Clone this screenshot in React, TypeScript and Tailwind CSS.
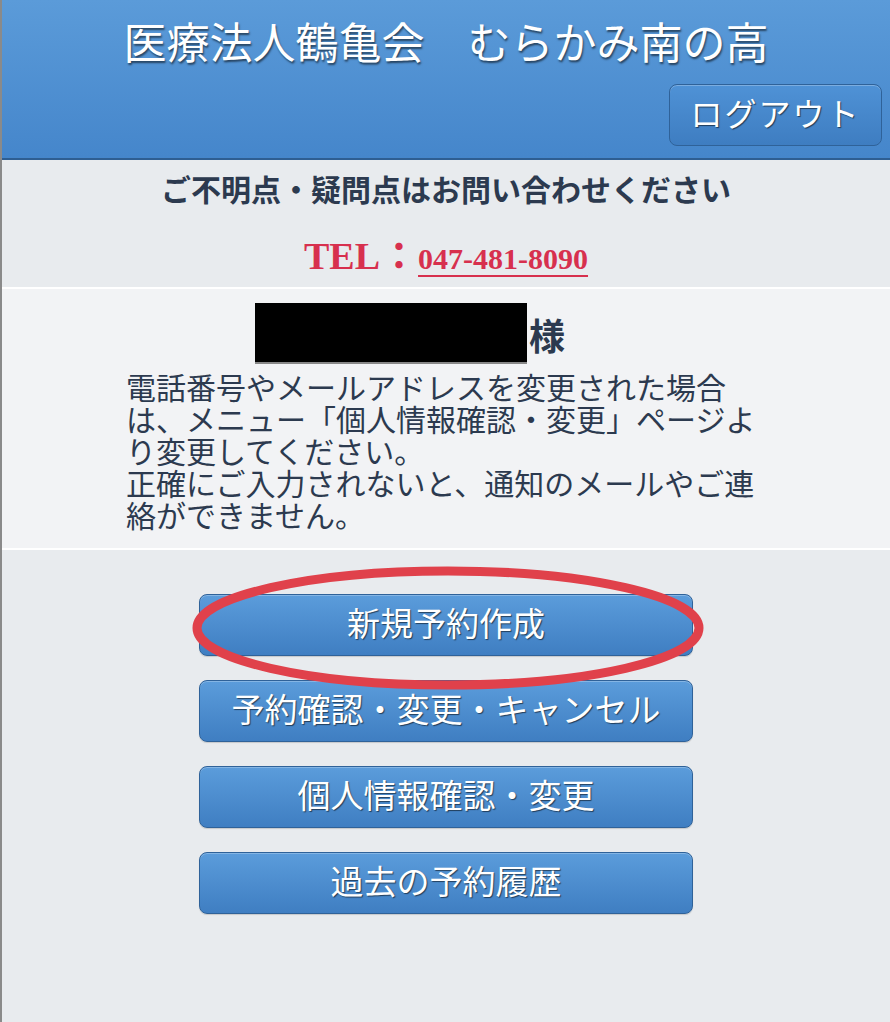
import React from "react";

const font = "font-['Liberation_Serif','Noto_Sans_CJK_JP',serif]";

function MenuButton({ label }: { label: string }) {
  return (
    <button
      className={`w-[494px] h-[62px] rounded-[8px] border border-[#2f6299] bg-gradient-to-b from-[#5b9cdb] to-[#3f7ec2] text-white text-[33px] leading-none shadow-[inset_0_1px_0_rgba(255,255,255,0.25),0_1px_1px_rgba(0,0,0,0.15)] [text-shadow:1px_1px_1px_rgba(0,0,0,0.55)] ${font}`}
    >
      {label}
    </button>
  );
}

export default function App() {
  return (
    <div className={`min-h-screen w-full bg-[#e8ebee] border-l-2 border-[#8a8a8a] ${font}`}>
      <header className="h-[160px] bg-gradient-to-b from-[#5b9bd9] to-[#4586cb] border-b-2 border-[#2e5e92] flex flex-col items-center">
        <h1 className="mt-[20px] text-[43px] leading-[50px] text-white [text-shadow:1px_2px_2px_rgba(0,0,0,0.55)]">
          医療法人鶴亀会　むらかみ南の高
        </h1>
        <div className="w-full flex justify-end pr-[8px] mt-[14px]">
          <button className="w-[213px] h-[62px] rounded-[8px] border border-[#2f6299] bg-gradient-to-b from-[#4f92d6] to-[#3e7dc1] text-white text-[32px] tracking-[2px] leading-none shadow-[inset_0_1px_0_rgba(255,255,255,0.25)] [text-shadow:1px_1px_1px_rgba(0,0,0,0.55)]">
            ログアウト
          </button>
        </div>
      </header>

      <section className="h-[129px] bg-[#e8ebee] border-b-2 border-white flex flex-col items-center">
        <p className="mt-[12px] text-[30px] leading-[38px] font-bold text-[#2c3a4f]">
          ご不明点・疑問点はお問い合わせください
        </p>
        <p className="mt-[24px] flex items-baseline text-[#d7304e] font-bold">
          <span className="text-[38px] leading-[44px]">TEL：</span>
          <span className="text-[30px] leading-[44px] underline decoration-2 underline-offset-[6px]">047-481-8090</span>
        </p>
      </section>

      <section className="h-[261px] bg-[#f2f3f5] border-b-2 border-white flex flex-col items-center">
        <div className="mt-[14px] flex items-end pr-[72px]">
          <div className="w-[272px] h-[61px] bg-black border-b-2 border-[#888]" />
          <span className="ml-[2px] mb-[4px] text-[36px] leading-[44px] text-[#2c3a4f] font-bold">様</span>
        </div>
        <p className="mt-[9px] w-[640px] text-[30px] leading-[32px] text-[#2c3a4f]">
          電話番号やメールアドレスを変更された場合は、メニュー「個人情報確認・変更」ページより変更してください。
          <br />
          正確にご入力されないと、通知のメールやご連絡ができません。
        </p>
      </section>

      <section className="relative flex flex-col items-center gap-[24px] pt-[44px] pb-[100px]">
        <MenuButton label="新規予約作成" />
        <MenuButton label="予約確認・変更・キャンセル" />
        <MenuButton label="個人情報確認・変更" />
        <MenuButton label="過去の予約履歴" />
        <svg
          className="absolute left-[190px] top-[15px] pointer-events-none"
          width="520"
          height="128"
          viewBox="0 0 520 128"
        >
          <ellipse cx="256" cy="63" rx="251" ry="57" fill="none" stroke="#e0414b" strokeWidth="9" />
        </svg>
      </section>
    </div>
  );
}
